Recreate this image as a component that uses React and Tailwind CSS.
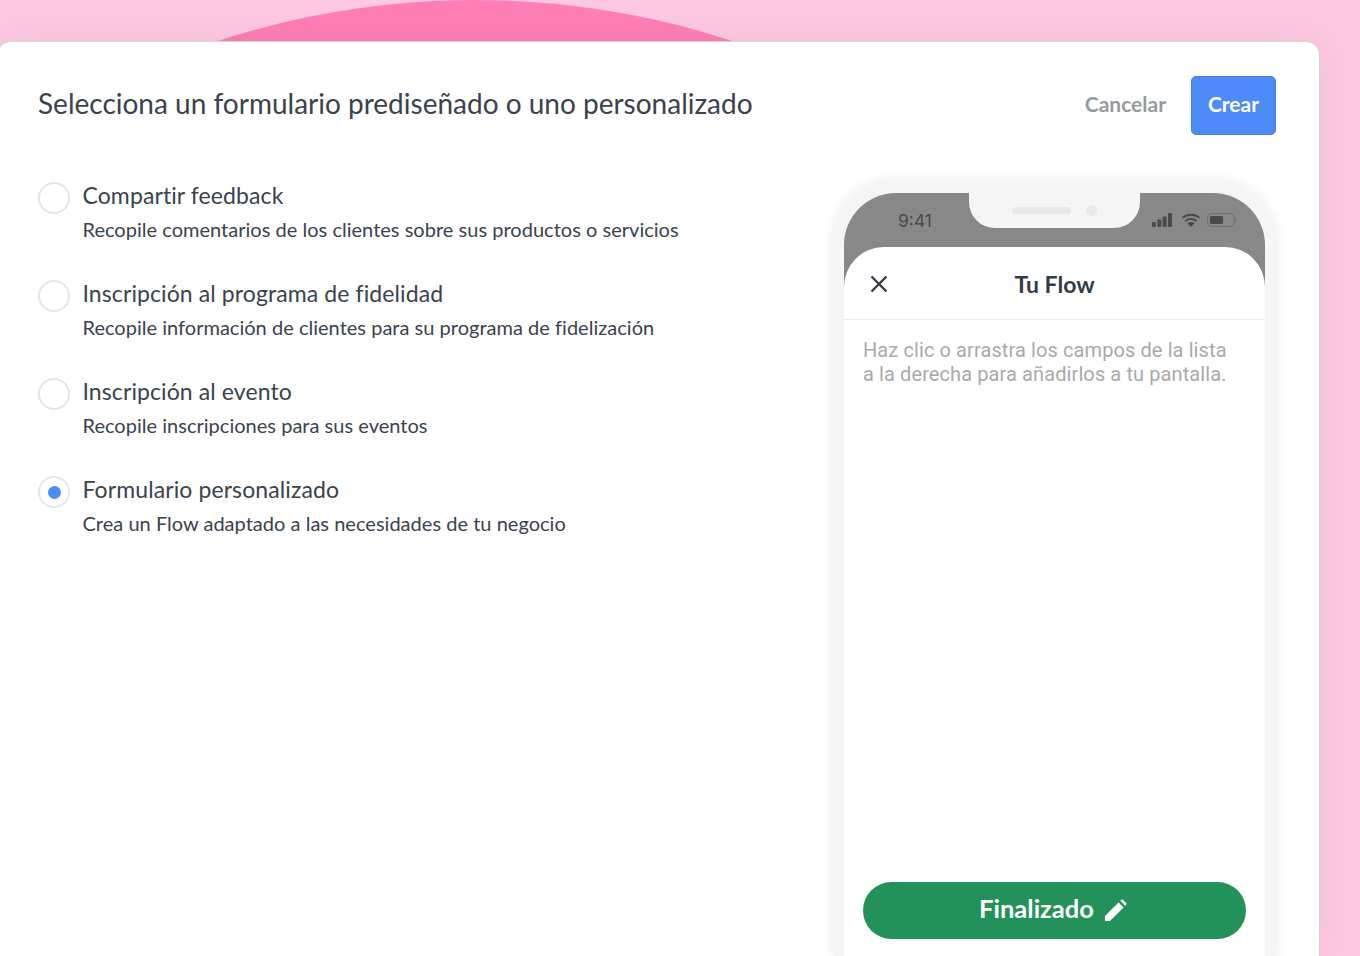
const options = [
  {
    title: "Compartir feedback",
    desc: "Recopile comentarios de los clientes sobre sus productos o servicios",
  },
  {
    title: "Inscripción al programa de fidelidad",
    desc: "Recopile información de clientes para su programa de fidelización",
  },
  {
    title: "Inscripción al evento",
    desc: "Recopile inscripciones para sus eventos",
  },
  {
    title: "Formulario personalizado",
    desc: "Crea un Flow adaptado a las necesidades de tu negocio",
    selected: true,
  },
];

function StatusIcons() {
  return (
    <svg width="86" height="16" viewBox="0 0 86 16" className="text-[#4a4a4a]">
      <g fill="currentColor">
        <rect x="0" y="10" width="4" height="5" rx="1" />
        <rect x="5.3" y="7.5" width="4" height="7.5" rx="1" />
        <rect x="10.6" y="4.5" width="4" height="10.5" rx="1" />
        <rect x="16" y="1" width="4" height="14" rx="1" />
        <path d="M39 15l-3.6-3.8c2.1-1.6 5.1-1.6 7.2 0z" />
        <rect x="58" y="4" width="13" height="8" rx="1.5" />
        <rect x="83" y="6.5" width="1.4" height="3" rx="0.7" opacity="0.4" />
      </g>
      <g fill="none" stroke="currentColor" strokeWidth="2">
        <path d="M30.5 5.8c4.9-4.2 12.1-4.2 17 0" />
        <path d="M33.4 9c3.3-2.7 7.9-2.7 11.2 0" />
      </g>
      <rect x="55.5" y="1.5" width="26.5" height="13" rx="3.5" fill="none" stroke="currentColor" strokeOpacity="0.4" />
    </svg>
  );
}

function PencilIcon() {
  return (
    <svg width="23" height="23" viewBox="0 0 24 24" fill="white">
      <path d="M1 23v-5.2L15.2 3.6l5.2 5.2L6.2 23z" />
      <path d="M17 1.9l1-1a1.3 1.3 0 0 1 1.8 0l3.3 3.3a1.3 1.3 0 0 1 0 1.8l-1 1z" />
    </svg>
  );
}

function Phone() {
  return (
    <div className="flex w-[443px] flex-col rounded-t-[62px] bg-[#f5f5f5] px-[11px] pt-3 shadow-[0_0_14px_rgba(0,0,0,0.09)]">
      <div className="flex h-full flex-col overflow-hidden rounded-t-[52px] bg-[#888888]">
        <div className="flex h-[54px] shrink-0 items-start justify-between">
          <span className="w-[125px] pt-[18px] pl-[54px] font-['Inter',sans-serif] text-[17.5px] leading-[20px] text-[#4a4a4a]">
            9:41
          </span>
          <div className="flex h-[35px] w-[171px] items-center justify-center gap-[15px] rounded-b-[26px] bg-[#f5f5f5] pb-[1px]">
            <div className="h-[7px] w-[59px] rounded-full bg-[#e8e8e8]"></div>
            <div className="h-[11px] w-[11px] rounded-full bg-[#e8e8e8]"></div>
          </div>
          <div className="w-[125px] pt-[19px] pl-[12px]">
            <StatusIcons />
          </div>
        </div>
        <div className="flex flex-1 flex-col rounded-t-[40px] bg-white">
          <div className="relative flex h-[73px] shrink-0 items-center justify-center border-b border-[#ececec] pt-[2px]">
            <svg
              className="absolute left-[24px] top-[26px]"
              width="22"
              height="22"
              viewBox="0 0 22 22"
              fill="none"
              stroke="#333b47"
              strokeWidth="2.4"
            >
              <path d="M3.5 3.5l15 15M18.5 3.5l-15 15" />
            </svg>
            <span className="font-['Lato',sans-serif] text-[23px] font-bold text-[#333b47]">
              Tu Flow
            </span>
          </div>
          <p className="px-[19px] pt-[18px] font-['Roboto',sans-serif] text-[20px] leading-[24px] tracking-[0.1px] text-[#a9a9a9]">
            Haz clic o arrastra los campos de la lista
            <br />a la derecha para añadirlos a tu pantalla.
          </p>
          <div className="mt-auto px-[19px] pb-[17px]">
            <button className="flex h-[57px] w-full items-center justify-center gap-[10px] rounded-full bg-[#22915a] pr-[3px] font-['Lato',sans-serif] text-[25.5px] font-bold text-white">
              <span className="pb-[4px]">Finalizado</span>
              <PencilIcon />
            </button>
          </div>
        </div>
      </div>
    </div>
  );
}

export default function App() {
  return (
    <div className="relative flex h-screen flex-col overflow-hidden bg-[#fec9e0] pt-[41px] font-['Lato',sans-serif]">
      <div className="absolute left-[-351px] top-0 h-[1652px] w-[1652px] rounded-full bg-[#ff7eb4]"></div>
      <div className="relative -ml-[3px] flex w-[1323px] flex-1 flex-col rounded-t-[14px] border border-b-0 border-[#d3d3d3] bg-white pl-[40px] pr-[43px] pt-[34px] shadow-[0_0_40px_rgba(0,0,0,0.06)]">
        <div className="flex items-center justify-between">
          <h1 className="pb-[6px] text-[28px] leading-[36px] text-[#3a424e]">
            Selecciona un formulario prediseñado o uno personalizado
          </h1>
          <div className="flex items-center gap-[25px]">
            <button className="pb-[4px] text-[21px] font-bold text-[#969a9e]">Cancelar</button>
            <button className="h-[59px] w-[85px] rounded-[5px] border border-[#4a81e0] bg-[#4d8bf9] pb-[4px] text-[21px] font-bold text-white">
              Crear
            </button>
          </div>
        </div>
        <div className="flex min-h-0 flex-1 justify-between pt-[46px]">
          <div className="flex flex-col gap-[34px] pt-px">
            {options.map((option) => (
              <div key={option.title} className="flex h-[64px] gap-[12.5px]">
                <div className="flex h-[32px] w-[32px] shrink-0 items-center justify-center rounded-full border-2 border-[#e4e4e4] bg-white">
                  {option.selected && (
                    <div className="h-[13px] w-[13px] rounded-full bg-[#4d8bf9]"></div>
                  )}
                </div>
                <div className="text-[#3a424e]">
                  <div className="text-[23px] leading-[26px] tracking-[0.1px]">{option.title}</div>
                  <div className="pt-[8px] text-[20px] leading-[26px] tracking-[0.02px]">{option.desc}</div>
                </div>
              </div>
            ))}
          </div>
          <Phone />
        </div>
      </div>
    </div>
  );
}
